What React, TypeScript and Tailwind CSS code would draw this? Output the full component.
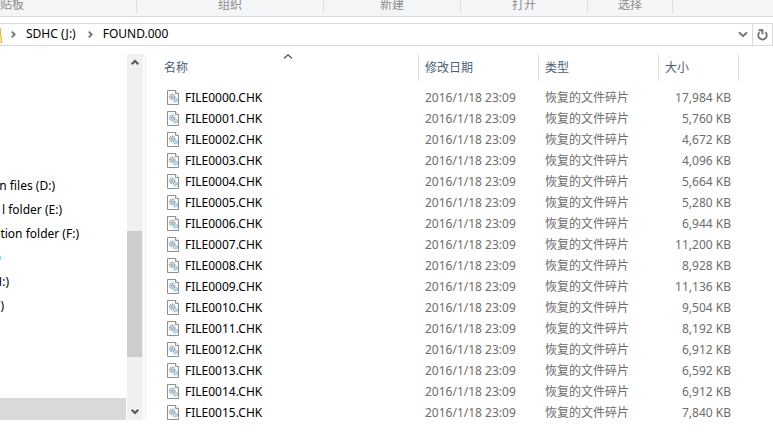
import React from 'react';

interface FileRow {
  name: string;
  size: string;
}

interface Drive {
  label: string;
  width: string;
}

const ribbonGroups = [
  { label: '组织', width: 'w-[187px]' },
  { label: '新建', width: 'w-[137px]' },
  { label: '打开', width: 'w-[127px]' },
  { label: '选择', width: 'w-[85px]' },
];

// labels run out of the pane on the left, so each one is anchored at its right end
const drives: Drive[] = [
  { label: 'n files (D:)', width: 'w-[55px]' },
  { label: 'l folder (E:)', width: 'w-[62px]' },
  { label: 'tion folder (F:)', width: 'w-[79px]' },
  { label: '', width: 'w-1' },
  { label: 'H:)', width: 'w-[9px]' },
  { label: ')', width: 'w-1' },
];

const columns = [
  { label: '名称', sorted: true },
  { label: '修改日期', sorted: false },
  { label: '类型', sorted: false },
  { label: '大小', sorted: false },
];

const files: FileRow[] = [
  { name: 'FILE0000.CHK', size: '17,984 KB' },
  { name: 'FILE0001.CHK', size: '5,760 KB' },
  { name: 'FILE0002.CHK', size: '4,672 KB' },
  { name: 'FILE0003.CHK', size: '4,096 KB' },
  { name: 'FILE0004.CHK', size: '5,664 KB' },
  { name: 'FILE0005.CHK', size: '5,280 KB' },
  { name: 'FILE0006.CHK', size: '6,944 KB' },
  { name: 'FILE0007.CHK', size: '11,200 KB' },
  { name: 'FILE0008.CHK', size: '8,928 KB' },
  { name: 'FILE0009.CHK', size: '11,136 KB' },
  { name: 'FILE0010.CHK', size: '9,504 KB' },
  { name: 'FILE0011.CHK', size: '8,192 KB' },
  { name: 'FILE0012.CHK', size: '6,912 KB' },
  { name: 'FILE0013.CHK', size: '6,592 KB' },
  { name: 'FILE0014.CHK', size: '6,912 KB' },
  { name: 'FILE0015.CHK', size: '7,840 KB' },
];

const CrumbArrow = () => (
  <svg width="5" height="7" viewBox="0 0 5 7" fill="none" stroke="#777" strokeWidth="1.8" className="shrink-0">
    <path d="M0.8 0.6 3.7 3.5 0.8 6.4" />
  </svg>
);

const ScrollArrow = ({ down = false }: { down?: boolean }) => (
  <svg width="8" height="7" viewBox="0 0 8 7" fill="none" stroke="#555" strokeWidth="2" className={down ? 'rotate-180' : ''}>
    <path d="M0.7 5.3 4 2 7.3 5.3" />
  </svg>
);

const FileIcon = () => (
  <svg width="12" height="15" viewBox="0 0 12 15" fill="none" className="shrink-0">
    <path d="M0.5 0.5H8.5L11.5 3.5V14.5H0.5Z" fill="#fcfcfc" stroke="#8f8f8f" />
    <path d="M8.5 0.5V3.5H11.5" fill="#fff" stroke="#8f8f8f" />
    <circle cx="5.2" cy="6.8" r="2.6" fill="#eef1f3" stroke="#8d979f" strokeWidth="1.2" strokeDasharray="1.3 0.6" />
    <circle cx="5.2" cy="6.8" r="1" stroke="#7d8790" strokeWidth="0.8" />
    <circle cx="8.5" cy="10" r="1.9" fill="#e2f1fb" stroke="#7fb5dc" strokeWidth="1.2" strokeDasharray="1.1 0.5" />
    <circle cx="8.5" cy="10" r="0.6" fill="#6ba7d3" />
  </svg>
);

const Ribbon = () => (
  <div className="flex h-[17px] border-b border-[#dadbdc] bg-[#f4f5f7] leading-[10px] text-[#8c8c8c]">
    <div className="flex h-[13px] w-[137px] shrink-0 items-start border-r border-[#dcdddf]">
      <span className="-ml-3">剪贴板</span>
    </div>
    {ribbonGroups.map((group) => (
      <div
        key={group.label}
        className={`flex h-[13px] shrink-0 items-start justify-center border-r border-[#dcdddf] ${group.width}`}
      >
        {group.label}
      </div>
    ))}
  </div>
);

const AddressBar = () => (
  <div className="mt-1.5 flex h-[23px] items-stretch border-y border-r border-[#d9d9d9]">
    <nav className="flex min-w-0 flex-1 items-center">
      <svg width="3" height="16" viewBox="0 0 3 16" className="mr-2 shrink-0">
        <path d="M0 1H1V9H2V15H0Z" fill="#ffe793" />
        <path d="M0.5 1V9.5H1.5V15.5H0" fill="none" stroke="#e8bd47" />
      </svg>
      <CrumbArrow />
      <button className="ml-2.5 pb-px leading-4">SDHC (J:)</button>
      <span className="ml-3 flex">
        <CrumbArrow />
      </span>
      <button className="ml-2.5 pb-px leading-4">FOUND.000</button>
    </nav>
    <button aria-label="Previous locations" className="flex w-[19px] items-center justify-center">
      <svg width="10" height="7" viewBox="0 0 10 7" fill="none" stroke="#777" strokeWidth="2">
        <path d="M1 1.2 5 5.2 9 1.2" />
      </svg>
    </button>
    <button aria-label="Refresh" className="flex w-5 items-center justify-center border-l border-[#d9d9d9]">
      <svg width="11" height="12" viewBox="0 0 11 12" fill="none" stroke="#707070" strokeWidth="1.9">
        <path d="M8.4 3.2A4.2 4.2 0 1 1 2.4 3.4" />
        <path d="M1.6 1.2H5.4V5.2" />
      </svg>
    </button>
  </div>
);

const NavigationPane = () => (
  <aside className="flex w-[146px] shrink-0 border-r border-[#f0f0f0]">
    <div className="flex min-w-0 flex-1 flex-col justify-between pt-[120px]">
      <ul>
        {drives.map((drive, i) => (
          <li key={i} className="h-6">
            {drive.label ? (
              <button className={`flex h-6 items-center justify-end whitespace-nowrap ${drive.width}`}>
                {drive.label}
              </button>
            ) : (
              <span className="flex h-6 items-center">
                <span className="h-1 w-px bg-[#7fe0f7]" />
              </span>
            )}
          </li>
        ))}
      </ul>
      <div className="h-[22px] bg-[#d9d9d9]" />
    </div>
    <div className="ml-px mr-0.5 flex w-4 flex-col bg-[#f0f0f0]">
      <button aria-label="Scroll up" className="flex h-[17px] w-[15px] items-center justify-center">
        <ScrollArrow />
      </button>
      <div className="flex-1" />
      <div className="h-[126px] w-[15px] bg-[#cdcdcd]" />
      <div className="h-[46px]" />
      <button aria-label="Scroll down" className="flex h-[17px] w-[15px] items-center justify-center">
        <ScrollArrow down />
      </button>
    </div>
  </aside>
);

const FileList = () => (
  <main className="min-w-0 flex-1 pl-3">
    <table className="w-full table-fixed border-collapse text-left">
      <colgroup>
        <col className="w-[261px]" />
        <col className="w-[120px]" />
        <col className="w-[120px]" />
        <col className="w-20" />
        <col />
      </colgroup>
      <thead>
        <tr>
          {columns.map((column) => (
            <th key={column.label} className="p-0 pb-1.5 font-normal">
              <button className="relative flex h-[27px] w-full items-center border-r border-[#e2e2e2] pl-1.5 text-[#4c607a]">
                {column.label}
                {column.sorted && (
                  <svg
                    width="9"
                    height="5"
                    viewBox="0 0 9 5"
                    fill="none"
                    stroke="#555"
                    strokeWidth="1.2"
                    className="absolute left-1/2 top-0 -translate-x-1/2"
                  >
                    <path d="M0.5 4.5 4.5 0.7 8.5 4.5" />
                  </svg>
                )}
              </button>
            </th>
          ))}
          <th className="p-0" />
        </tr>
      </thead>
      <tbody className="text-[#6d6d6d]">
        {files.map((file) => (
          <tr key={file.name} className="h-[21px] whitespace-nowrap leading-5">
            <td className="p-0 pl-[9px]">
              <div className="flex items-center gap-1.5 text-black">
                <FileIcon />
                {file.name}
              </div>
            </td>
            <td className="p-0 pl-1.5">2016/1/18 23:09</td>
            <td className="p-0 pl-1.5">恢复的文件碎片</td>
            <td className="p-0 pr-2 text-right">{file.size}</td>
            <td className="p-0" />
          </tr>
        ))}
      </tbody>
    </table>
  </main>
);

const App: React.FC = () => {
  return (
    <div className="min-h-screen overflow-hidden bg-white font-['Noto_Sans','Noto_Sans_CJK_SC',sans-serif] text-[12px] text-black">
      <Ribbon />
      <AddressBar />
      <div className="mt-2 flex h-[366px]">
        <NavigationPane />
        <FileList />
      </div>
    </div>
  );
};

export default App;
